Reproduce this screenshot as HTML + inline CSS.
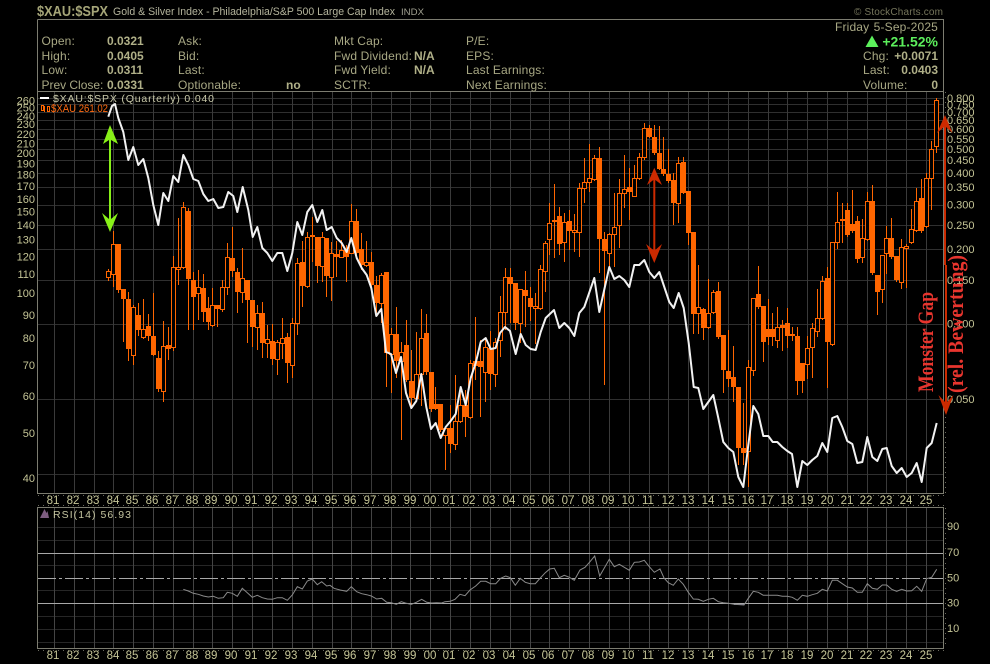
<!DOCTYPE html>
<html><head><meta charset="utf-8"><title>$XAU:$SPX</title>
<style>
html,body{margin:0;padding:0;background:#000;width:990px;height:664px;overflow:hidden}
svg{display:block}
text{font-family:"Liberation Sans",sans-serif}
.l{fill:#a8a884;font-size:12px;letter-spacing:.16px}
.b{fill:#b0b088;font-size:12px;font-weight:bold}
.a{fill:#c4c496;font-size:11px}
.x{fill:#c4c496;font-size:11.5px;text-anchor:middle}
</style></head><body>
<svg width="990" height="664" viewBox="0 0 990 664" xmlns="http://www.w3.org/2000/svg">
<rect width="990" height="664" fill="#000"/>

<!-- horizontal grid main -->
<path shape-rendering="crispEdges" stroke="#2f2f2f" fill="none" d="M38 98.5H943M38 104.5H943M38 112.5H943M38 120.5H943M38 129.5H943M38 139.5H943M38 149.5H943M38 160.5H943M38 173.5H943M38 187.5H943M38 205.5H943M38 225.5H943M38 249.5H943M38 280.5H943M38 324.5H943M38 399.5H943M38 474.5H943"/>
<!-- vertical grid main -->
<path shape-rendering="crispEdges" stroke="#3a3a3a" fill="none" d="M54.5 92V493M74.5 92V493M94.5 92V493M113.5 92V493M133.5 92V493M153.5 92V493M173.5 92V493M193.5 92V493M212.5 92V493M232.5 92V493M252.5 92V493M272.5 92V493M292.5 92V493M312.5 92V493M332.5 92V493M351.5 92V493M371.5 92V493M391.5 92V493M410.5 92V493M430.5 92V493M450.5 92V493M470.5 92V493M490.5 92V493M510.5 92V493M530.5 92V493M549.5 92V493M569.5 92V493M589.5 92V493M609.5 92V493M629.5 92V493M649.5 92V493M668.5 92V493M688.5 92V493M708.5 92V493M728.5 92V493M748.5 92V493M768.5 92V493M787.5 92V493M807.5 92V493M827.5 92V493M847.5 92V493M867.5 92V493M886.5 92V493M906.5 92V493M926.5 92V493"/>

<!-- wicks -->
<path shape-rendering="crispEdges" stroke="#ff6600" fill="none" d="M108.5 269V281M113.5 231V287M118.5 244V293M123.5 289V342M128.5 292V361M133.5 305V365M138.5 303V336M143.5 299V339M148.5 314V341M153.5 293V356M158.5 351V392M163.5 321V402M168.5 327V360M173.5 256V351M178.5 218V285M183.5 202V269M188.5 208V330M193.5 272V330M198.5 270V320M203.5 274V322M208.5 297V330M212.5 288V327M217.5 305V327M222.5 280V312M227.5 243V295M232.5 227V277M237.5 268V313M242.5 248V303M247.5 280V343M252.5 300V347M257.5 305V350M262.5 302V358M267.5 325V358M272.5 324V365M277.5 340V375M282.5 318V359M287.5 333V383M292.5 318V378M297.5 258V335M302.5 241V307M307.5 232V288M312.5 217V262M317.5 237V283M322.5 232V282M326.5 238V297M331.5 242V301M336.5 241V277M341.5 240V258M346.5 245V282M351.5 204V253M356.5 209V255M361.5 233V270M366.5 241V267M371.5 252V287M376.5 276V313M381.5 273V323M386.5 272V387M391.5 328V393M396.5 307V378M401.5 342V440M406.5 320V382M411.5 350V409M416.5 332V400M421.5 309V406M426.5 314V375M431.5 372V412M435.5 387V410M440.5 404V432M445.5 428V470M450.5 405V453M455.5 375V450M460.5 387V423M465.5 390V437M470.5 360V419M475.5 317V380M480.5 340V417M485.5 338V402M490.5 331V390M495.5 338V387M500.5 296V357M505.5 268V330M510.5 268V323M515.5 283V330M520.5 289V343M525.5 271V327M530.5 287V321M535.5 293V344M540.5 265V310M545.5 241V292M549.5 203V255M554.5 184V258M559.5 207V255M564.5 213V262M569.5 210V250M574.5 214V252M579.5 183V257M584.5 158V203M589.5 144V192M594.5 155V181M599.5 147V273M604.5 232V385M609.5 233V270M614.5 193V267M619.5 179V248M624.5 155V208M629.5 168V220M634.5 165V197M639.5 153V180M644.5 123V160M649.5 125V138M654.5 125V155M659.5 126V170M663.5 137V176M668.5 149V183M673.5 173V225M678.5 157V223M683.5 157V194M688.5 191V245M693.5 232V334M698.5 265V334M703.5 308V340M708.5 279V329M713.5 290V314M718.5 282V339M723.5 335V393M728.5 330V387M733.5 346V402M738.5 387V465M743.5 403V465M748.5 360V487M753.5 298V376M758.5 266V309M763.5 306V362M768.5 299V345M772.5 313V346M777.5 307V348M782.5 320V351M787.5 308V348M792.5 327V341M797.5 327V395M802.5 363V393M807.5 336V379M812.5 323V378M817.5 289V337M822.5 276V320M827.5 267V388M832.5 242V346M837.5 192V249M842.5 203V243M847.5 203V237M852.5 190V233M857.5 216V263M862.5 219V263M867.5 192V241M872.5 185V275M877.5 275V315M882.5 255V303M886.5 226V274M891.5 218V259M896.5 256V282M901.5 239V289M906.5 244V288M911.5 209V244M916.5 188V232M921.5 179V233M926.5 173V228M931.5 141V210M936.5 98V153"/>
<!-- hollow bodies -->
<path shape-rendering="crispEdges" stroke="#ff6600" fill="#000" d="M106.5 271.5h4v6h-4zM111.5 244.5h4v30h-4zM131.5 307.5h4v48h-4zM141.5 329.5h4v8h-4zM161.5 346.5h4v45h-4zM171.5 267.5h4v80h-4zM176.5 267.5h4v2h-4zM181.5 207.5h4v60h-4zM196.5 287.5h4v6h-4zM210.5 305.5h4v20h-4zM220.5 287.5h4v22h-4zM225.5 257.5h4v30h-4zM240.5 278.5h4v14h-4zM255.5 313.5h4v14h-4zM265.5 339.5h4v4h-4zM275.5 342.5h4v17h-4zM280.5 338.5h4v5h-4zM290.5 323.5h4v42h-4zM295.5 263.5h4v60h-4zM305.5 237.5h4v49h-4zM320.5 237.5h4v29h-4zM329.5 253.5h4v24h-4zM339.5 250.5h4v7h-4zM349.5 221.5h4v32h-4zM364.5 262.5h4v3h-4zM379.5 275.5h4v28h-4zM389.5 334.5h4v20h-4zM399.5 352.5h4v9h-4zM414.5 374.5h4v24h-4zM419.5 338.5h4v36h-4zM443.5 428.5h4v7h-4zM453.5 421.5h4v23h-4zM458.5 405.5h4v16h-4zM468.5 363.5h4v54h-4zM483.5 347.5h4v25h-4zM493.5 342.5h4v32h-4zM498.5 312.5h4v28h-4zM503.5 277.5h4v35h-4zM518.5 289.5h4v34h-4zM533.5 306.5h4v2h-4zM538.5 269.5h4v39h-4zM543.5 243.5h4v28h-4zM547.5 223.5h4v16h-4zM562.5 222.5h4v20h-4zM572.5 230.5h4v2h-4zM577.5 188.5h4v44h-4zM582.5 182.5h4v6h-4zM587.5 178.5h4v4h-4zM592.5 158.5h4v21h-4zM607.5 234.5h4v19h-4zM612.5 227.5h4v7h-4zM617.5 193.5h4v32h-4zM622.5 189.5h4v4h-4zM632.5 178.5h4v18h-4zM637.5 157.5h4v21h-4zM642.5 128.5h4v29h-4zM676.5 163.5h4v40h-4zM696.5 307.5h4v6h-4zM706.5 313.5h4v14h-4zM711.5 292.5h4v20h-4zM746.5 367.5h4v84h-4zM751.5 298.5h4v72h-4zM775.5 327.5h4v13h-4zM805.5 348.5h4v16h-4zM810.5 328.5h4v19h-4zM815.5 318.5h4v13h-4zM820.5 281.5h4v37h-4zM830.5 242.5h4v102h-4zM835.5 222.5h4v20h-4zM860.5 238.5h4v19h-4zM865.5 201.5h4v38h-4zM880.5 255.5h4v34h-4zM884.5 238.5h4v15h-4zM899.5 247.5h4v35h-4zM904.5 246.5h4v2h-4zM909.5 229.5h4v13h-4zM914.5 201.5h4v29h-4zM924.5 178.5h4v48h-4zM929.5 149.5h4v29h-4zM934.5 100.5h4v46h-4z"/>
<!-- filled bodies -->
<path shape-rendering="crispEdges" fill="#ff6600" d="M116 244h5v46h-5zM121 289h5v10h-5zM126 299h5v50h-5zM136 315h5v15h-5zM146 326h5v10h-5zM151 336h5v19h-5zM156 358h5v31h-5zM166 345h5v4h-5zM186 211h5v68h-5zM191 280h5v17h-5zM201 288h5v24h-5zM206 308h5v14h-5zM215 305h5v4h-5zM230 258h5v13h-5zM235 272h5v20h-5zM245 280h5v20h-5zM250 300h5v27h-5zM260 313h5v30h-5zM270 341h5v18h-5zM285 337h5v26h-5zM300 262h5v24h-5zM310 235h5v2h-5zM315 237h5v29h-5zM324 238h5v38h-5zM334 254h5v3h-5zM344 250h5v7h-5zM354 221h5v32h-5zM359 249h5v16h-5zM369 262h5v23h-5zM374 285h5v18h-5zM384 272h5v81h-5zM394 334h5v27h-5zM404 345h5v35h-5zM409 381h5v17h-5zM424 333h5v39h-5zM429 372h5v37h-5zM433 404h5v5h-5zM438 404h5v26h-5zM448 428h5v16h-5zM463 405h5v12h-5zM473 361h5v5h-5zM478 361h5v6h-5zM488 348h5v26h-5zM508 277h5v7h-5zM513 283h5v40h-5zM523 290h5v6h-5zM528 298h5v9h-5zM552 220h5v2h-5zM557 216h5v28h-5zM567 221h5v10h-5zM597 158h5v81h-5zM602 239h5v12h-5zM627 187h5v5h-5zM647 128h5v9h-5zM652 137h5v16h-5zM657 153h5v16h-5zM661 169h5v5h-5zM666 174h5v7h-5zM671 180h5v23h-5zM681 162h5v31h-5zM686 191h5v42h-5zM691 232h5v82h-5zM701 309h5v19h-5zM716 291h5v46h-5zM721 335h5v35h-5zM726 371h5v8h-5zM731 377h5v10h-5zM736 387h5v61h-5zM741 448h5v5h-5zM756 294h5v13h-5zM761 306h5v36h-5zM766 329h5v8h-5zM770 329h5v8h-5zM780 325h5v3h-5zM785 323h5v13h-5zM790 334h5v2h-5zM795 336h5v45h-5zM800 363h5v18h-5zM825 278h5v64h-5zM840 219h5v2h-5zM845 210h5v25h-5zM850 224h5v7h-5zM855 221h5v38h-5zM870 201h5v72h-5zM875 275h5v17h-5zM889 238h5v19h-5zM894 256h5v24h-5zM919 198h5v33h-5z"/>

<!-- white ratio line -->
<polyline fill="none" stroke="#f2f2f2" stroke-width="2" stroke-linejoin="round" points="108.3,116.7 112,106 115,104 118.3,118 123.3,132 128.3,160 133.3,147 138.3,165 143.3,159 148.3,178 153.3,205 158.3,225 163.3,193 168.3,201 173.3,176 178.3,182 183.3,155 188.3,165 193.3,179 198.3,181 203.3,194 208.3,201 213.3,199 218.3,208 223.3,207 228.3,192 233.3,196 237.3,212 242.7,187 248.3,210 252.7,237 257.3,227 262.3,248 267.3,253 272.3,261 277.3,253 282.3,253 287.3,271 292.3,253 297.3,222 302.3,235 307.3,212 312.3,205 317.3,222 322.3,210 326.7,230 331.7,227 336.7,238 341.7,243 346.7,252 351.3,238 356.7,258 361.7,268 366.7,275 371.3,288 376.3,316 381.3,309 386,352 391,354 396,373 401,357 406,393 411.3,408 416.3,401 421.3,374 426.3,407 431,429 435.7,423 440.7,438 445.7,427 450.7,421 455.7,414 460.7,387 465.7,405 470.7,378 475.7,363 480.7,342 485.7,338 490.7,349 495.7,348 500,333 505,327 510,331 515.7,354 520.7,334 525.7,345 530.7,349 535.7,350 540.7,332 545.7,318 554,310 559.3,328 564.3,323 569.3,328 574.3,336 579.3,313 584.3,307 594.3,278 599.3,312 609.3,267 614.3,279 619.3,276 624.3,280 629.3,287 634.3,265 639.3,265 644.3,260 649.3,272 654.3,278 659.3,272 664.3,287 669.3,302 673.7,308 678.7,293 683.7,308 688.7,343 693.7,387 698.3,388 703.3,409 708.3,402 713.3,395 718.3,418 723.3,442 728.3,448 733.3,452 738.3,477 743.3,487 748.3,445 753.3,406 758.3,414 763.3,436 768.3,436 772.7,442 777.3,442 782.3,447 787.3,451 792,454 797.3,487 802.3,461 807.3,465 812.3,460 817.3,456 822.3,443 827.3,452 832.3,418 837.3,416 842.3,427 847.3,441 852.3,444 857.3,463 862.3,462 867.3,437 872.3,457 877.3,461 882.3,449 886.7,448 891.7,466 896.7,473 901.7,468 906.7,477 911.7,473 916.7,463 921.7,482 926.7,448 931.7,443 936.7,423"/>

<!-- frames -->
<path shape-rendering="crispEdges" stroke="#7c7c70" fill="none" d="M37.5 19.5H943.5V91.5M37.5 19.5V493.5H943.5V91.5M37.5 91.5H943.5M37.5 507.5H943.5V648.5H37.5z"/>
<path shape-rendering="crispEdges" stroke="#6c6c60" fill="none" stroke-dasharray="1 4" d="M38 495.5H944M38 505.5H944M38 650.5H944M945.5 92V493M945.5 508V648"/>

<!-- header -->
<text x="37" y="16" textLength="71" lengthAdjust="spacingAndGlyphs" style="font-size:15px;font-weight:bold;fill:#a5a578">$XAU:$SPX</text>
<text x="113" y="15" textLength="282" lengthAdjust="spacingAndGlyphs" style="font-size:11px;fill:#b4b49c">Gold &amp; Silver Index - Philadelphia/S&amp;P 500 Large Cap Index</text>
<text x="401" y="15" textLength="23" lengthAdjust="spacingAndGlyphs" style="font-size:9px;fill:#a0a090">INDX</text>
<text x="854" y="15" textLength="89" lengthAdjust="spacing" style="font-size:10px;fill:#76765c">© StockCharts.com</text>

<text class="l" x="41.5" y="45">Open:</text><text class="b" x="107" y="45">0.0321</text>
<text class="l" x="41.5" y="60">High:</text><text class="b" x="107" y="60">0.0405</text>
<text class="l" x="41.5" y="74">Low:</text><text class="b" x="107" y="74">0.0311</text>
<text class="l" x="41.5" y="89" textLength="62">Prev Close:</text><text class="b" x="107" y="89">0.0331</text>
<text class="l" x="178" y="45">Ask:</text>
<text class="l" x="178" y="60">Bid:</text>
<text class="l" x="178" y="74">Last:</text>
<text class="l" x="178" y="89">Optionable:</text><text class="b" x="286" y="89">no</text>
<text class="l" x="334" y="45">Mkt Cap:</text>
<text class="l" x="334" y="60">Fwd Dividend:</text><text class="b" x="414" y="60">N/A</text>
<text class="l" x="334" y="74">Fwd Yield:</text><text class="b" x="414" y="74">N/A</text>
<text class="l" x="334" y="89">SCTR:</text>
<text class="l" x="466" y="45">P/E:</text>
<text class="l" x="466" y="60">EPS:</text>
<text class="l" x="466" y="74">Last Earnings:</text>
<text class="l" x="466" y="89">Next Earnings:</text>
<text class="l" x="835" y="31">Friday</text><text class="l" x="938" y="31" text-anchor="end">5-Sep-2025</text>
<path fill="#5cf05c" d="M872 35.5L878.5 47H865.5z"/>
<text x="938" y="46.5" text-anchor="end" style="font-size:14px;font-weight:bold;fill:#5cf05c">+21.52%</text>
<text class="l" x="863" y="60">Chg:</text><text class="b" x="938" y="60" text-anchor="end">+0.0071</text>
<text class="l" x="863" y="74">Last:</text><text class="b" x="938" y="74" text-anchor="end">0.0403</text>
<text class="l" x="863" y="89">Volume:</text><text class="b" x="938" y="89" text-anchor="end">0</text>

<!-- legend -->
<rect x="40" y="97" width="9" height="2" fill="#fff"/>
<text x="53" y="102" textLength="161" style="font-size:10.5px;fill:#c8c8a8">$XAU:$SPX (Quarterly) 0.040</text>
<path stroke="#ff6600" fill="none" d="M41.5 105.5h2v5h-2zM44.5 106V112M47.5 106.5h2v5h-2z"/>
<text x="51" y="112" textLength="57" lengthAdjust="spacingAndGlyphs" style="font-size:11px;fill:#ff6a10">$XAU 261.02</text>

<!-- left axis -->
<g class="a" text-anchor="end" style="font-size:11px;fill:#c4c496">
<text x="35" y="104.5">260</text><text x="35" y="111.5">250</text><text x="35" y="120">240</text><text x="35" y="128">230</text><text x="35" y="138">220</text><text x="35" y="147.5">210</text><text x="35" y="157">200</text><text x="35" y="167.5">190</text><text x="35" y="178.5">180</text><text x="35" y="190">170</text><text x="35" y="203">160</text><text x="35" y="215.5">150</text><text x="35" y="229">140</text><text x="35" y="243.5">130</text><text x="35" y="260.5">120</text><text x="35" y="278">110</text><text x="35" y="297">100</text><text x="35" y="319">90</text><text x="35" y="342">80</text><text x="35" y="369">70</text><text x="35" y="400">60</text><text x="35" y="437">50</text><text x="35" y="482">40</text>
</g>
<!-- right axis -->
<g style="font-size:11px;fill:#c4c496">
<text x="947" y="102">0.800</text><text x="947" y="108.5">0.750</text><text x="947" y="116">0.700</text><text x="947" y="124">0.650</text><text x="947" y="133">0.600</text><text x="947" y="143">0.550</text><text x="947" y="153">0.500</text><text x="947" y="164">0.450</text><text x="947" y="177">0.400</text><text x="947" y="191">0.350</text><text x="947" y="208.5">0.300</text><text x="947" y="229">0.250</text><text x="947" y="253">0.200</text><text x="947" y="284">0.150</text><text x="947" y="327.5">0.100</text><text x="947" y="403">0.050</text>
</g>

<!-- green arrow -->
<path fill="#88f018" d="M110 125L118 144 111 140V219L118 213 110 232 102 213 109 219V140L103 144z"/>
<!-- red arrow mid -->
<path fill="#cc2a00" d="M654.3 167.7L662 185 655.3 180V250L662 244 654.3 263 646 244 653.3 250V180L647 185z"/>
<!-- red arrow right -->
<path fill="#cc2a00" d="M945 115L952.5 133 946 127V265H947V402L953.5 395 946 415 938.5 395 945 402V265H944V127L937 133z"/>

<!-- annotation text -->
<text transform="translate(933,392) rotate(-90)" textLength="100" lengthAdjust="spacingAndGlyphs" style="font-family:'Liberation Serif',serif;font-weight:bold;font-size:22px;fill:#e8352e">Monster Gap</text>
<text transform="translate(963,393) rotate(-90)" textLength="138" lengthAdjust="spacingAndGlyphs" style="font-family:'Liberation Serif',serif;font-weight:bold;font-size:22px;fill:#e8352e">(rel. Bewertung)</text>

<!-- x labels -->
<g class="x" style="font-size:11.5px;fill:#c4c496;text-anchor:middle">
<text x="53" y="504">81</text><text x="73" y="504">82</text><text x="93" y="504">83</text><text x="113" y="504">84</text><text x="132" y="504">85</text><text x="152" y="504">86</text><text x="172" y="504">87</text><text x="192" y="504">88</text><text x="211" y="504">89</text><text x="231" y="504">90</text><text x="251" y="504">91</text><text x="271" y="504">92</text><text x="291" y="504">93</text><text x="311" y="504">94</text><text x="331" y="504">95</text><text x="350" y="504">96</text><text x="370" y="504">97</text><text x="390" y="504">98</text><text x="410" y="504">99</text><text x="430" y="504">00</text><text x="449" y="504">01</text><text x="469" y="504">02</text><text x="489" y="504">03</text><text x="509" y="504">04</text><text x="529" y="504">05</text><text x="548" y="504">06</text><text x="568" y="504">07</text><text x="588" y="504">08</text><text x="608" y="504">09</text><text x="628" y="504">10</text><text x="648" y="504">11</text><text x="668" y="504">12</text><text x="688" y="504">13</text><text x="708" y="504">14</text><text x="728" y="504">15</text><text x="748" y="504">16</text><text x="767" y="504">17</text><text x="787" y="504">18</text><text x="807" y="504">19</text><text x="827" y="504">20</text><text x="847" y="504">21</text><text x="866" y="504">22</text><text x="886" y="504">23</text><text x="906" y="504">24</text><text x="926" y="504">25</text>
<text x="53" y="659">81</text><text x="73" y="659">82</text><text x="93" y="659">83</text><text x="113" y="659">84</text><text x="132" y="659">85</text><text x="152" y="659">86</text><text x="172" y="659">87</text><text x="192" y="659">88</text><text x="211" y="659">89</text><text x="231" y="659">90</text><text x="251" y="659">91</text><text x="271" y="659">92</text><text x="291" y="659">93</text><text x="311" y="659">94</text><text x="331" y="659">95</text><text x="350" y="659">96</text><text x="370" y="659">97</text><text x="390" y="659">98</text><text x="410" y="659">99</text><text x="430" y="659">00</text><text x="449" y="659">01</text><text x="469" y="659">02</text><text x="489" y="659">03</text><text x="509" y="659">04</text><text x="529" y="659">05</text><text x="548" y="659">06</text><text x="568" y="659">07</text><text x="588" y="659">08</text><text x="608" y="659">09</text><text x="628" y="659">10</text><text x="648" y="659">11</text><text x="668" y="659">12</text><text x="688" y="659">13</text><text x="708" y="659">14</text><text x="728" y="659">15</text><text x="748" y="659">16</text><text x="767" y="659">17</text><text x="787" y="659">18</text><text x="807" y="659">19</text><text x="827" y="659">20</text><text x="847" y="659">21</text><text x="866" y="659">22</text><text x="886" y="659">23</text><text x="906" y="659">24</text><text x="926" y="659">25</text>
</g>

<!-- RSI panel grid -->
<path shape-rendering="crispEdges" stroke="#262626" fill="none" d="M38 527.5H943M38 540.5H943M38 565.5H943M38 590.5H943M38 616.5H943M38 629.5H943M38 642.5H943"/>
<path shape-rendering="crispEdges" stroke="#444" fill="none" d="M54.5 508V648M74.5 508V648M94.5 508V648M113.5 508V648M133.5 508V648M153.5 508V648M173.5 508V648M193.5 508V648M212.5 508V648M232.5 508V648M252.5 508V648M272.5 508V648M292.5 508V648M312.5 508V648M332.5 508V648M351.5 508V648M371.5 508V648M391.5 508V648M410.5 508V648M430.5 508V648M450.5 508V648M470.5 508V648M490.5 508V648M510.5 508V648M530.5 508V648M549.5 508V648M569.5 508V648M589.5 508V648M609.5 508V648M629.5 508V648M649.5 508V648M668.5 508V648M688.5 508V648M708.5 508V648M728.5 508V648M748.5 508V648M768.5 508V648M787.5 508V648M807.5 508V648M827.5 508V648M847.5 508V648M867.5 508V648M886.5 508V648M906.5 508V648M926.5 508V648"/>
<path shape-rendering="crispEdges" stroke="#a8a8a8" fill="none" d="M38 553.5H943M38 603.5H943"/>
<path shape-rendering="crispEdges" stroke="#a8a8a8" fill="none" stroke-dasharray="18 3 3 3" d="M38 578.5H943"/>
<!-- RSI line -->
<path shape-rendering="crispEdges" stroke="#7a7a9a" fill="none" d="M734 604.5H744"/>
<polyline fill="none" stroke="#8a8a8a" stroke-width="1" points="183.3,589.3 188.3,591 193.3,593.3 198.3,594.3 203.3,596 208.3,597 213.3,596.3 218.3,598.3 223.3,597.7 227.3,592.3 232.3,593.3 237.3,596.3 242.3,588.3 247.3,592.7 252.3,597.3 257.3,595.3 262.3,597.7 267.3,599 272.3,599.3 277.3,597.7 282.3,597.7 287.3,600.3 292.3,595 297.3,586.7 302.3,589 307.3,581 312.3,579 317.3,584.7 321.7,581.7 326.7,586 330,585.3 334,588.3 340,590 346.7,591.3 351.3,586.7 356.7,591.7 361.7,593.7 366.7,594.7 371.3,596 376.7,599 381.7,598.3 386.7,602.3 391.3,602.7 396.3,604.3 401.3,601.7 406.3,603.3 411.3,604.3 416.3,602.3 421.7,599.3 426.7,602.3 431.7,603 436.7,602.7 441.7,603 445,601.7 450.3,601.3 455,599.3 460,594.3 465,595.7 470,590 475.7,586 480.7,581.3 485.7,581.3 490.7,583.7 495.7,583.7 500.7,578.3 505.7,576 510.3,577.7 515.3,585.3 520.3,578.3 525.3,582.3 530.3,583.7 535.3,583.7 540.3,578 545.3,572.7 549.7,569 554.3,568.3 559.3,577.7 564.3,575.3 569.3,577.3 574.3,580.3 580,570 585,567.3 590,561.7 594.7,556 599.7,576 609.3,559.3 614.3,566.7 619.3,564.3 629.3,570.3 634.3,562.3 639.3,562 644.3,560.3 649.3,566.7 654.3,572.3 660,569 664,578 668.3,582.7 673.3,585.3 678.3,579 683.3,584.3 688.3,592.3 693.3,599 698.3,599.3 703.3,601.3 708.3,599.3 713.3,598.3 718.3,601.7 723.3,602.7 728.3,603.3 734,604.3 744,605 748.3,598.3 753.3,591.3 758.3,592.3 763.3,595.3 768.3,595.3 777.3,595.3 782.3,596.3 787.3,596.3 792.3,597.3 797.3,600.3 802.3,595.3 807.3,596.3 812.3,594.7 817.3,593.3 822.3,589.3 827.3,591 832.3,580.3 837.3,580.3 842.3,583.7 847.3,587 852.3,588 857.3,592.3 862.3,592.3 867.3,583.7 872.3,588.3 877.3,589.3 882.3,585 886.7,585 891.7,589.3 896.7,591.3 901.7,589.3 906.7,591 911.7,590.7 916.7,586.3 921.7,591.3 926.7,578.7 931.7,577.3 936.7,569.3"/>
<!-- RSI labels -->
<path fill="#7d5d80" d="M40 518L44.5 509 46.5 513 47.5 511 49 518z"/>
<text x="53" y="518" textLength="78" style="font-size:10.5px;fill:#c4c4a0">RSI(14) 56.93</text>
<g style="font-size:11px;fill:#c4c496">
<text x="947" y="530">90</text><text x="947" y="556">70</text><text x="947" y="581.5">50</text><text x="947" y="606.5">30</text><text x="947" y="632">10</text>
</g>
</svg>
</body></html>
